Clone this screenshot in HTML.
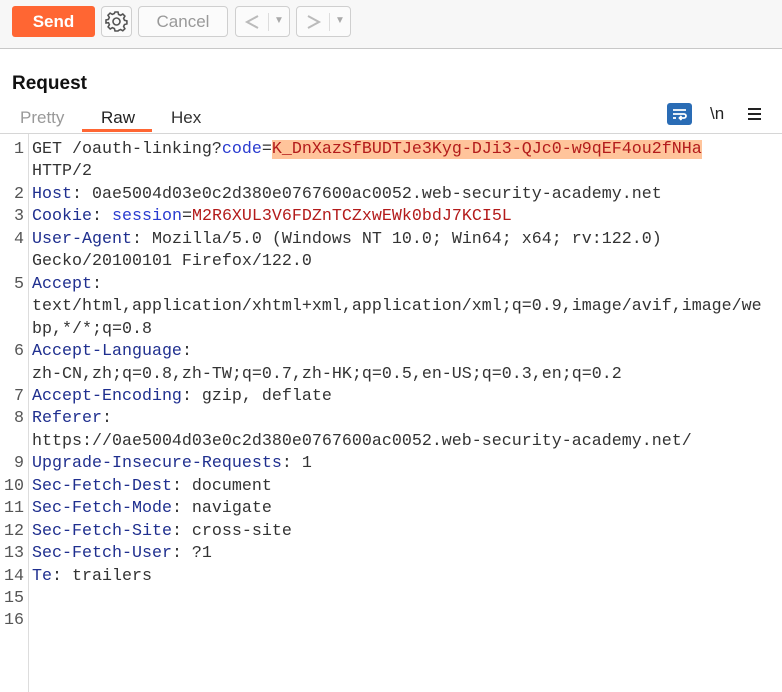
<!DOCTYPE html>
<html><head><meta charset="utf-8"><style>
*{margin:0;padding:0;box-sizing:border-box}
body{width:782px;height:692px;background:#fff;position:relative;overflow:hidden;font-family:"Liberation Sans",sans-serif}
.tb{position:absolute;left:0;top:0;width:782px;height:49px;background:#f7f7f7;border-bottom:1px solid #c8c8c8}
.btn{position:absolute;border:1px solid #cfcfcf;border-radius:4px;background:#fbfbfb}
.send{position:absolute;left:12px;top:6px;width:83px;height:31px;background:#ff6633;border-radius:3px;color:#fff;font-weight:bold;font-size:17px;text-align:center;line-height:31px}
.title{position:absolute;left:12px;top:73px;font-size:19px;font-weight:bold;color:#111}
.tab{position:absolute;top:108px;font-size:17px}
.code{position:absolute;left:0;top:139px;font-family:"Liberation Mono",monospace;font-size:16.67px;line-height:22.45px;color:#333}
.gut{position:absolute;left:28px;top:134px;width:1px;height:558px;background:#ddd}
.ln{position:absolute;left:0;width:24px;text-align:right;color:#555}
.tx{position:absolute;left:32px;white-space:pre}
.h{color:#1f2f8f}.b{color:#2a3bd0}.r{color:#b31b1b}.hl{background:#ffc49b;color:#b31b1b}
</style></head><body>
<div class="tb">
<div class="send">Send</div>
<div class="btn" style="left:101px;top:6px;width:31px;height:31px">
<svg width="29" height="29" viewBox="0 0 29 29"><g fill="none" stroke="#555" stroke-width="1.6"><circle cx="14.5" cy="14.5" r="3.5"/><path d="M13 5h3l.6 2.4 2 .9 2.2-1.3 2.1 2.1-1.3 2.2.9 2 2.4.6v3l-2.4.6-.9 2 1.3 2.2-2.1 2.1-2.2-1.3-2 .9L16 24h-3l-.6-2.4-2-.9-2.2 1.3-2.1-2.1 1.3-2.2-.9-2L4 16v-3l2.4-.6.9-2-1.3-2.2 2.1-2.1 2.2 1.3 2-.9z"/></g></svg></div>
<div class="btn" style="left:138px;top:6px;width:90px;height:31px;color:#999;font-size:17px;text-align:center;line-height:29px">Cancel</div>
<div class="btn" style="left:235px;top:6px;width:55px;height:31px"><svg style="position:absolute;left:8px;top:7px" width="16" height="16"><path d="M14 2L3 8l11 6" fill="none" stroke="#bbb" stroke-width="2"/></svg><span style="position:absolute;left:32px;top:6px;width:1px;height:18px;background:#ddd"></span><span style="position:absolute;left:38px;top:8px;color:#aaa;font-size:10px">▼</span></div>
<div class="btn" style="left:296px;top:6px;width:55px;height:31px"><svg style="position:absolute;left:9px;top:7px" width="16" height="16"><path d="M2 2l11 6-11 6" fill="none" stroke="#bbb" stroke-width="2"/></svg><span style="position:absolute;left:32px;top:6px;width:1px;height:18px;background:#ddd"></span><span style="position:absolute;left:38px;top:8px;color:#aaa;font-size:10px">▼</span></div>
</div>
<div class="title">Request</div>
<div class="tab" style="left:20px;color:#999">Pretty</div>
<div class="tab" style="left:101px;color:#222">Raw</div>
<div class="tab" style="left:171px;color:#333">Hex</div>
<div style="position:absolute;left:82px;top:129px;width:70px;height:3px;background:#ff6633"></div>
<div style="position:absolute;left:0;top:133px;width:782px;height:1px;background:#d6d6d6"></div>
<div style="position:absolute;left:667px;top:103px;width:25px;height:22px;background:#2a6cb5;border-radius:3px">
<svg width="25" height="22" viewBox="0 0 25 22"><g fill="none" stroke="#fff" stroke-width="1.8"><path d="M6 7h13M6 11h11a2 2 0 010 4h-4M14.5 13l-2 2 2 2"/><path d="M6 15h3"/></g></svg></div>
<div style="position:absolute;left:710px;top:104px;font-size:17px;color:#222">\n</div>
<div style="position:absolute;left:748px;top:108px;width:13px;height:2px;background:#222;box-shadow:0 5px 0 #222,0 10px 0 #222"></div>
<div class="gut"></div>
<div class="code">
<div class="ln" style="top:0">1</div><div class="tx" style="top:0">GET /oauth-linking?<span class="b">code</span>=<span class="hl">K_DnXazSfBUDTJe3Kyg-DJi3-QJc0-w9qEF4ou2fNHa</span></div>
<div class="tx" style="top:22.45px">HTTP/2</div>
<div class="ln" style="top:44.9px">2</div><div class="tx" style="top:44.9px"><span class="h">Host</span>: 0ae5004d03e0c2d380e0767600ac0052.web-security-academy.net</div>
<div class="ln" style="top:67.35px">3</div><div class="tx" style="top:67.35px"><span class="h">Cookie</span>: <span class="b">session</span>=<span class="r">M2R6XUL3V6FDZnTCZxwEWk0bdJ7KCI5L</span></div>
<div class="ln" style="top:89.8px">4</div><div class="tx" style="top:89.8px"><span class="h">User-Agent</span>: Mozilla/5.0 (Windows NT 10.0; Win64; x64; rv:122.0)</div>
<div class="tx" style="top:112.25px">Gecko/20100101 Firefox/122.0</div>
<div class="ln" style="top:134.7px">5</div><div class="tx" style="top:134.7px"><span class="h">Accept</span>:</div>
<div class="tx" style="top:157.15px">text/html,application/xhtml+xml,application/xml;q=0.9,image/avif,image/we</div>
<div class="tx" style="top:179.6px">bp,*/*;q=0.8</div>
<div class="ln" style="top:202.05px">6</div><div class="tx" style="top:202.05px"><span class="h">Accept-Language</span>:</div>
<div class="tx" style="top:224.5px">zh-CN,zh;q=0.8,zh-TW;q=0.7,zh-HK;q=0.5,en-US;q=0.3,en;q=0.2</div>
<div class="ln" style="top:246.95px">7</div><div class="tx" style="top:246.95px"><span class="h">Accept-Encoding</span>: gzip, deflate</div>
<div class="ln" style="top:269.4px">8</div><div class="tx" style="top:269.4px"><span class="h">Referer</span>:</div>
<div class="tx" style="top:291.85px">https://0ae5004d03e0c2d380e0767600ac0052.web-security-academy.net/</div>
<div class="ln" style="top:314.3px">9</div><div class="tx" style="top:314.3px"><span class="h">Upgrade-Insecure-Requests</span>: 1</div>
<div class="ln" style="top:336.75px">10</div><div class="tx" style="top:336.75px"><span class="h">Sec-Fetch-Dest</span>: document</div>
<div class="ln" style="top:359.2px">11</div><div class="tx" style="top:359.2px"><span class="h">Sec-Fetch-Mode</span>: navigate</div>
<div class="ln" style="top:381.65px">12</div><div class="tx" style="top:381.65px"><span class="h">Sec-Fetch-Site</span>: cross-site</div>
<div class="ln" style="top:404.1px">13</div><div class="tx" style="top:404.1px"><span class="h">Sec-Fetch-User</span>: ?1</div>
<div class="ln" style="top:426.55px">14</div><div class="tx" style="top:426.55px"><span class="h">Te</span>: trailers</div>
<div class="ln" style="top:449px">15</div>
<div class="ln" style="top:471.45px">16</div>
</div>
</body></html>
